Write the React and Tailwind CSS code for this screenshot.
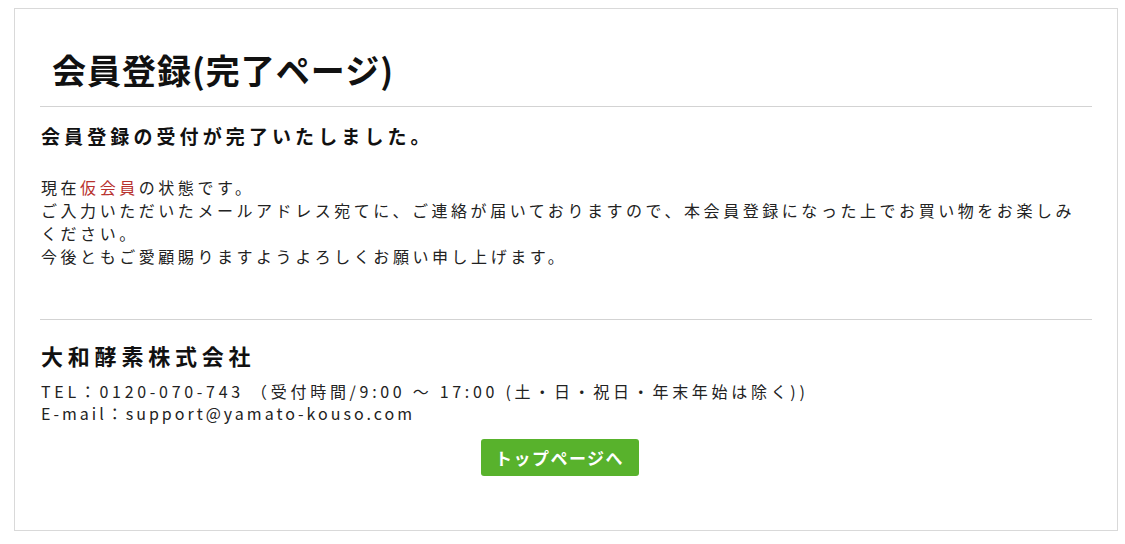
import React from "react";

export default function App() {
  return (
    <div
      className="w-[1125px] h-[544px] bg-white overflow-hidden"
      style={{ fontFamily: '"Noto Sans CJK JP", "Noto Sans", sans-serif' }}
    >
      <div className="ml-[14px] mt-[8px] w-[1104px] h-[523px] border border-[#d9d9d9] px-[25px] text-[#222]">
        <div className="h-[97px] pt-[25px] flex items-center pl-[12px]">
          <h1 className="text-[34px] leading-none font-bold text-[#111] tracking-[1px]">
            会員登録(完了ページ)
          </h1>
        </div>
        <div className="border-t border-[#d3d3d3]" />
        <div className="mt-[15px] pl-[1px] text-[19px] leading-[28px] font-bold text-[#111] tracking-[4.1px]">
          会員登録の受付が完了いたしました。
        </div>
        <div className="mt-[26px] pl-[1px] text-[16px] leading-[23px] tracking-[3.55px]">
          <div>
            現在<span className="text-[#b8322f]">仮会員</span>の状態です。
          </div>
          <div>
            ご入力いただいたメールアドレス宛てに、ご連絡が届いておりますので、本会員登録になった上でお買い物をお楽しみ
            <br />
            ください。
          </div>
          <div>今後ともご愛顧賜りますようよろしくお願い申し上げます。</div>
        </div>
        <div className="mt-[51px] border-t border-[#d3d3d3]" />
        <div className="mt-[20px] pl-[1px] text-[22px] leading-[30px] font-bold text-[#111] tracking-[4.8px]">
          大和酵素株式会社
        </div>
        <div className="mt-[10px] pl-[1px] text-[16px] leading-[22px]">
          <div className="tracking-[3.7px]">TEL：0120-070-743 （受付時間/9:00 〜 17:00 (土・日・祝日・年末年始は除く))</div>
          <div className="tracking-[3px]">E-mail：support@yamato-kouso.com</div>
        </div>
        <div className="mt-[15px] flex justify-center pr-[13px]">
          <button className="w-[158px] h-[37px] rounded-[3px] bg-[#58b22c] text-white text-[17px] font-bold tracking-[1.5px] flex items-center justify-center">
            トップページへ
          </button>
        </div>
      </div>
    </div>
  );
}
